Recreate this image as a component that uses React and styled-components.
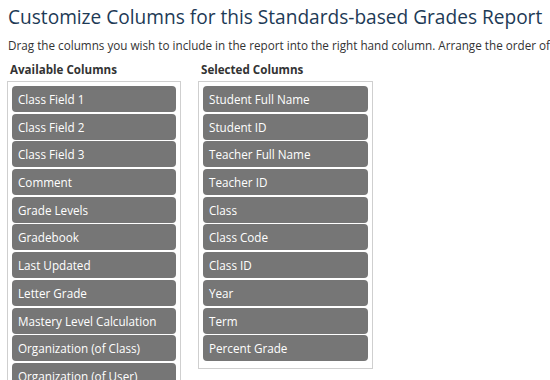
import React from "react";
import styled, { createGlobalStyle } from "styled-components";

const Global = createGlobalStyle`
  html, body { margin: 0; padding: 0; background: #fff; }
  body { font-family: "Open Sans", "Liberation Sans", sans-serif; overflow: hidden; }
`;

const Page = styled.div`
  width: 550px;
  height: 380px;
  overflow: hidden;
  padding: 0 0 0 8px;
  box-sizing: border-box;
`;

const Title = styled.h1`
  margin: 0;
  padding-top: 3px;
  font-size: 19.1px;
  font-weight: 400;
  line-height: 28px;
  color: #1d3a56;
  white-space: nowrap;
`;

const Intro = styled.p`
  margin: 4px 0 0;
  font-size: 11.7px;
  line-height: 20px;
  color: #333;
  white-space: nowrap;
`;

const Columns = styled.div`
  display: flex;
  gap: 17px;
  margin-top: 7px;
  margin-left: -1px;
  align-items: flex-start;
`;

const Column = styled.div`
  display: flex;
  flex-direction: column;
`;

const Heading = styled.div`
  font-size: 11.6px;
  font-weight: 700;
  line-height: 16px;
  color: #333;
  padding-left: 3px;
  margin-bottom: 3px;
`;

const List = styled.div`
  width: ${(p) => p.$width}px;
  box-sizing: border-box;
  border: 1px solid #cfcfcf;
  padding: 4px 4px 7px 4px;
  display: flex;
  flex-direction: column;
  gap: 1.7px;
`;

const Item = styled.div`
  height: 26px;
  box-sizing: border-box;
  background: #767676;
  border-radius: 4px;
  color: #fff;
  font-size: 11.7px;
  line-height: 26px;
  padding-left: 6px;
  white-space: nowrap;
  flex-shrink: 0;
`;

const available = [
  "Class Field 1",
  "Class Field 2",
  "Class Field 3",
  "Comment",
  "Grade Levels",
  "Gradebook",
  "Last Updated",
  "Letter Grade",
  "Mastery Level Calculation",
  "Organization (of Class)",
  "Organization (of User)",
  "Section",
];

const selected = [
  "Student Full Name",
  "Student ID",
  "Teacher Full Name",
  "Teacher ID",
  "Class",
  "Class Code",
  "Class ID",
  "Year",
  "Term",
  "Percent Grade",
];

export default function App() {
  return (
    <Page>
      <Global />
      <Title>Customize Columns for this Standards-based Grades Report</Title>
      <Intro>
        Drag the columns you wish to include in the report into the right hand column. Arrange the order of the columns by dragging them up or down.
      </Intro>
      <Columns>
        <Column>
          <Heading>Available Columns</Heading>
          <List $width={174}>
            {available.map((c) => (
              <Item key={c}>{c}</Item>
            ))}
          </List>
        </Column>
        <Column>
          <Heading>Selected Columns</Heading>
          <List $width={175}>
            {selected.map((c) => (
              <Item key={c}>{c}</Item>
            ))}
          </List>
        </Column>
      </Columns>
    </Page>
  );
}
